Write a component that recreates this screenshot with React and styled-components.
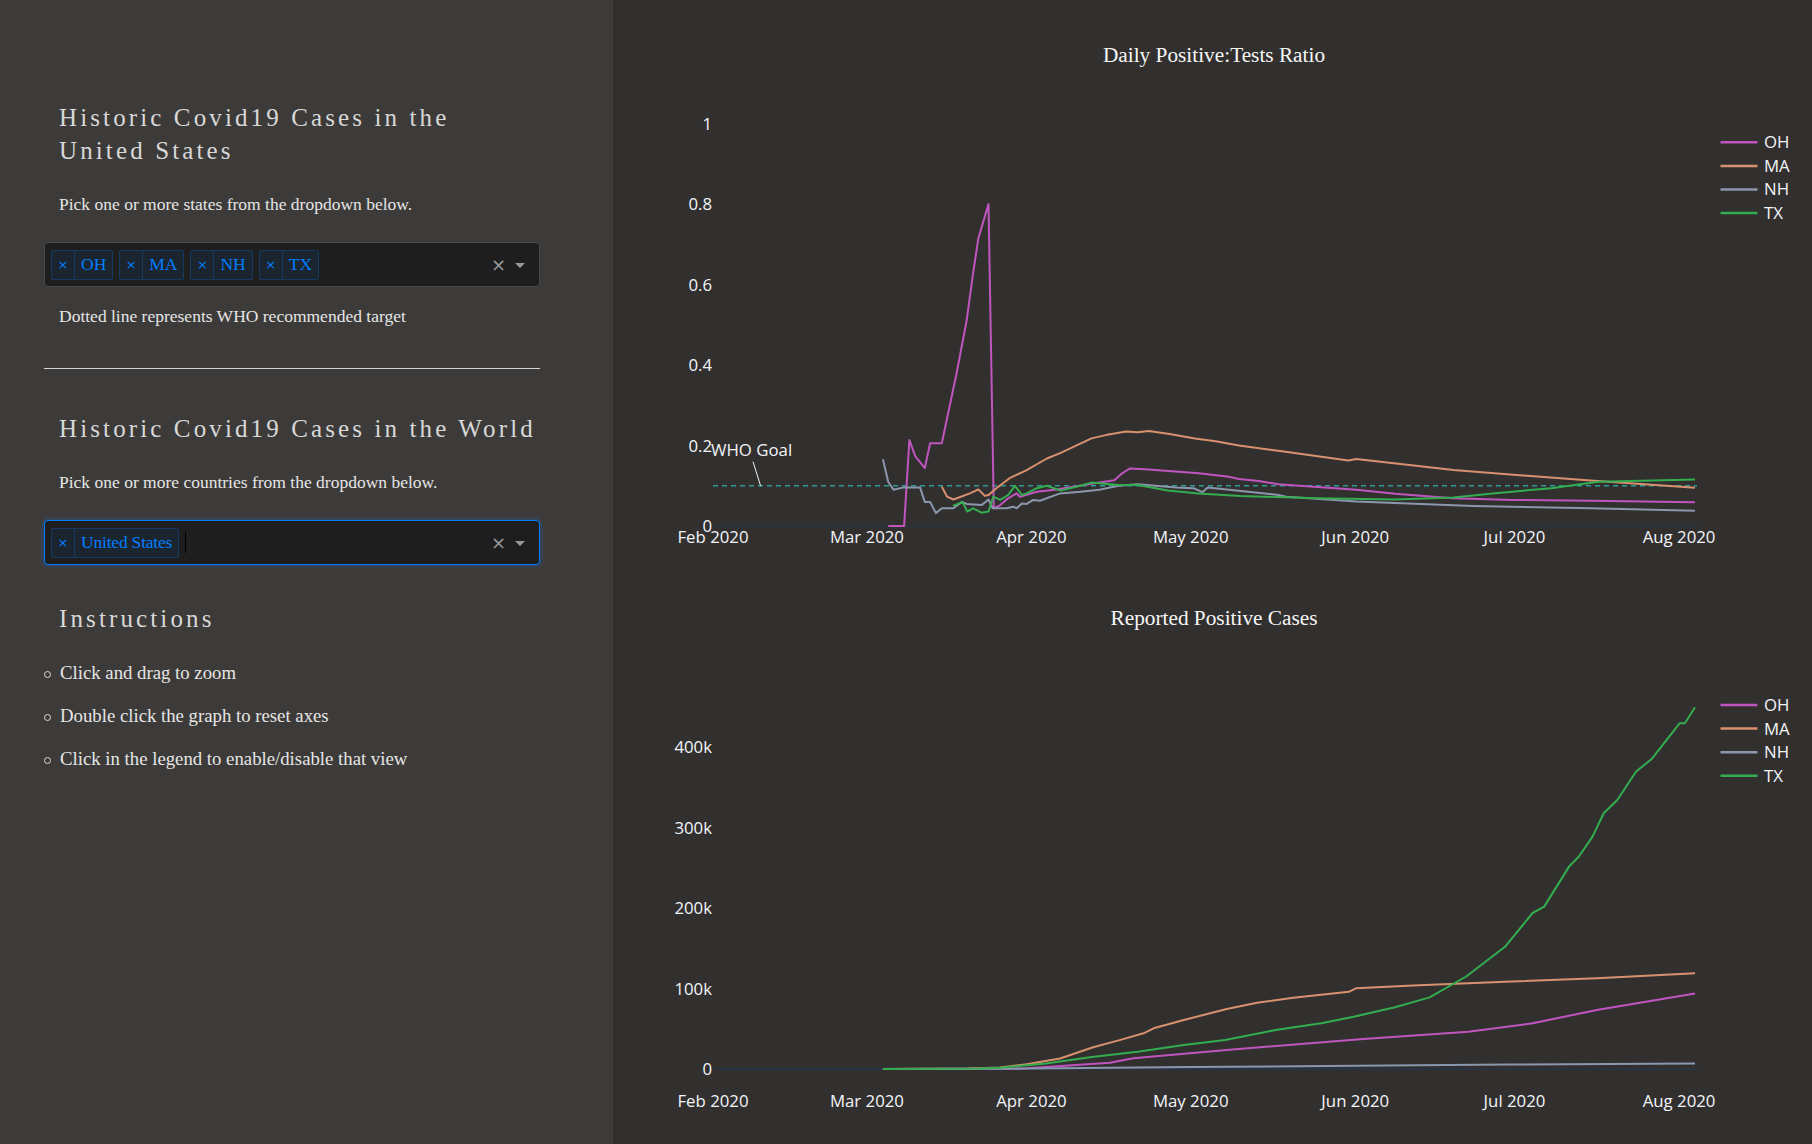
import React from "react";
import styled, { createGlobalStyle } from "styled-components";

const GlobalStyle = createGlobalStyle`
  html, body {
    margin: 0;
    padding: 0;
    background: #32302f;
  }
  body {
    font-family: "Liberation Serif", "Times New Roman", serif;
  }
`;

// x axis: day 0 is Feb 1 2020
const DAY_PX = 5.308;
const X0 = 100;
const xAt = (day) => X0 + day * DAY_PX;
const PLOT_RIGHT = 1084;
const LABEL_SHIFT = 5.9;

const MONTHS = [
  { label: "Feb 2020", day: 0 },
  { label: "Mar 2020", day: 29 },
  { label: "Apr 2020", day: 60 },
  { label: "May 2020", day: 90 },
  { label: "Jun 2020", day: 121 },
  { label: "Jul 2020", day: 151 },
  { label: "Aug 2020", day: 182 },
];

const COLORS = {
  OH: "#c055c0",
  MA: "#d8916f",
  NH: "#8c96ad",
  TX: "#33ad4f",
};

const RATIO = {
  OH: [[33,0],[36,0],[37,0.214],[38.1,0.174],[39.9,0.144],[40.9,0.206],[43.1,0.206],[45.9,0.38],[47.8,0.512],[49,0.629],[50,0.716],[51.9,0.801],[52.9,0.044],[54.1,0.052],[55.6,0.069],[57.2,0.081],[57.8,0.073],[61,0.085],[64.8,0.091],[69,0.1],[72.8,0.108],[75.6,0.114],[77.1,0.131],[78.5,0.143],[81.4,0.141],[91.5,0.131],[96.9,0.123],[99.1,0.117],[102.8,0.112],[106.5,0.104],[121.2,0.09],[128.5,0.08],[139.5,0.069],[150.6,0.065],[165.3,0.063],[185,0.059]],
  MA: [[43.1,0.098],[44.1,0.073],[45.3,0.066],[48.4,0.081],[50,0.091],[51.2,0.075],[51.9,0.077],[53.4,0.094],[56,0.12],[59.1,0.139],[62.9,0.168],[65.5,0.182],[71.3,0.218],[74,0.226],[77.8,0.235],[80,0.233],[82.1,0.236],[86,0.229],[90.8,0.218],[94.7,0.211],[99.1,0.2],[106.5,0.187],[119.7,0.163],[121.2,0.167],[139.5,0.139],[165.3,0.113],[185,0.095]],
  NH: [[32,0.166],[33,0.11],[34,0.09],[35.9,0.096],[39,0.096],[39.9,0.06],[40.9,0.06],[42,0.032],[43.1,0.044],[45.3,0.044],[46.9,0.06],[47.8,0.055],[50.6,0.052],[51.9,0.066],[52.7,0.044],[55.3,0.044],[56.6,0.048],[57.2,0.044],[58.2,0.056],[59.1,0.055],[60.3,0.065],[61.6,0.063],[65.4,0.081],[69.2,0.085],[72.8,0.09],[76.4,0.1],[80,0.104],[87.2,0.096],[90.5,0.094],[92.2,0.084],[93.2,0.096],[106.5,0.077],[108,0.073],[121.2,0.061],[143.2,0.05],[165.3,0.044],[185,0.038]],
  TX: [[45.2,0.05],[47,0.06],[47.9,0.036],[49,0.044],[50.6,0.033],[51.9,0.036],[52.8,0.073],[54.1,0.065],[55.6,0.077],[56.9,0.1],[58.2,0.077],[59.1,0.081],[61,0.094],[62.9,0.1],[65.5,0.088],[69.2,0.1],[71.3,0.108],[76.4,0.102],[80,0.102],[85.7,0.088],[91.5,0.081],[99.3,0.075],[113.8,0.069],[128.5,0.066],[139.5,0.071],[146.9,0.081],[157.9,0.094],[166.8,0.11],[185,0.116]],
};

// values in thousands
const CASES = {
  OH: [[32,0],[50,0.3],[59.1,0.9],[74.8,7.8],[79.2,13.3],[96.8,23.6],[121.9,37],[142.3,46.4],[154.4,56.8],[166.5,73.4],[185,94]],
  MA: [[32,0],[48,0.5],[54.1,2],[59.1,6],[65.4,13],[71.6,27],[76.6,36],[81.1,44.4],[83,50.6],[88.7,61],[96.8,74.6],[102.5,82.5],[109.3,88.5],[119.8,96],[121.2,100.5],[131.9,104],[149.2,108.6],[166.5,112.8],[185,119]],
  NH: [[32,0],[60,0.5],[90,2.5],[121,4],[150,5.5],[185,7]],
  TX: [[32,0],[50,0.5],[54.1,1.5],[62.7,7],[71.4,15],[80,21.5],[88.7,30],[96.5,36],[106,48.5],[114.6,57],[120.7,65],[128.5,76.7],[135,89],[141.9,115],[149.2,152],[154.4,194],[156.6,202],[161.3,252],[163.1,264],[165.7,289],[167.8,318],[170.4,335],[173.9,370],[176.9,386],[182.1,430],[183.1,430],[185,450]],
};

const STATES = ["OH", "MA", "NH", "TX"];

const LineChart = ({ title, titleY, zeroY, unit, ticks, labelY, legendY, data, goal }) => {
  const yAt = (v) => zeroY - v * unit;
  const toPath = (pts) =>
    pts.map(([d, v], i) => `${i ? "L" : "M"}${xAt(d).toFixed(1)},${yAt(v).toFixed(1)}`).join(" ");

  return (
    <ChartSvg width="1199" height="572" viewBox="0 0 1199 572">
      <ChartTitle x="601" y={titleY} textAnchor="middle">
        {title}
      </ChartTitle>

      {ticks.map((t) => (
        <TickText key={t.label} x="99" y={yAt(t.value) + LABEL_SHIFT} textAnchor="end">
          {t.label}
        </TickText>
      ))}
      {MONTHS.map((m) => (
        <TickText key={m.label} x={xAt(m.day)} y={labelY + LABEL_SHIFT} textAnchor="middle">
          {m.label}
        </TickText>
      ))}

      <ZeroLine x1={X0 + 1} x2={PLOT_RIGHT} y1={zeroY} y2={zeroY} />

      {goal && (
        <g>
          <GoalLine x1={X0} x2={PLOT_RIGHT} y1={yAt(goal)} y2={yAt(goal)} />
          <ArrowLine x1="140" y1="461.7" x2="147.6" y2={yAt(goal)} />
          <TickText x="98" y="455.8">WHO Goal</TickText>
        </g>
      )}

      {STATES.map((s) => (
        <SeriesPath key={s} d={toPath(data[s])} stroke={COLORS[s]} />
      ))}

      {STATES.map((s, i) => (
        <g key={s}>
          <LegendLine x1="1107.5" x2="1144.5" y1={legendY + i * 23.6} y2={legendY + i * 23.6} stroke={COLORS[s]} />
          <TickText x="1151" y={legendY + i * 23.6 + LABEL_SHIFT}>
            {s}
          </TickText>
        </g>
      ))}
    </ChartSvg>
  );
};

const StateTags = ["OH", "MA", "NH", "TX"];

const App = () => {
  return (
    <Page>
      <GlobalStyle />
      <Sidebar>
        <Heading>Historic Covid19 Cases in the United States</Heading>
        <Note $top={25}>Pick one or more states from the dropdown below.</Note>
        <Dropdown $top={26}>
          <TagList>
            {StateTags.map((s) => (
              <Tag key={s}>
                <TagRemove>×</TagRemove>
                <TagLabel>{s}</TagLabel>
              </Tag>
            ))}
          </TagList>
          <ClearX>×</ClearX>
          <Arrow />
        </Dropdown>
        <Note $top={17}>Dotted line represents WHO recommended target</Note>

        <Divider />

        <Heading $top={43}>Historic Covid19 Cases in the World</Heading>
        <Note $top={24.6}>Pick one or more countries from the dropdown below.</Note>
        <Dropdown $top={26.7} $focused>
          <TagList>
            <Tag>
              <TagRemove>×</TagRemove>
              <TagLabel $narrow>United States</TagLabel>
            </Tag>
            <Caret />
          </TagList>
          <ClearX>×</ClearX>
          <Arrow />
        </Dropdown>

        <Heading $top={36.7}>Instructions</Heading>
        <Steps>
          <Step>Click and drag to zoom</Step>
          <Step>Double click the graph to reset axes</Step>
          <Step>Click in the legend to enable/disable that view</Step>
        </Steps>
      </Sidebar>

      <Main>
        <LineChart
          title="Daily Positive:Tests Ratio"
          titleY={62}
          zeroY={526}
          unit={402}
          ticks={[
            { value: 0, label: "0" },
            { value: 0.2, label: "0.2" },
            { value: 0.4, label: "0.4" },
            { value: 0.6, label: "0.6" },
            { value: 0.8, label: "0.8" },
            { value: 1, label: "1" },
          ]}
          labelY={537.3}
          legendY={142.3}
          data={RATIO}
          goal={0.1}
        />
        <LineChart
          title="Reported Positive Cases"
          titleY={53}
          zeroY={497}
          unit={0.804}
          ticks={[
            { value: 0, label: "0" },
            { value: 100, label: "100k" },
            { value: 200, label: "200k" },
            { value: 300, label: "300k" },
            { value: 400, label: "400k" },
          ]}
          labelY={528.7}
          legendY={133}
          data={CASES}
        />
      </Main>
    </Page>
  );
};

export default App;

const Page = styled.div`
  display: flex;
  min-height: 100vh;
  width: 100%;
`;

const Sidebar = styled.aside`
  width: 613px;
  flex-shrink: 0;
  box-sizing: border-box;
  padding: 101px 73px 0 44px;
  background-color: #3d3b39;
  color: #e6e6e6;
`;

const Heading = styled.h3`
  margin: ${(p) => p.$top || 0}px -3px 0 0;
  padding-left: 15px;
  font-weight: 400;
  font-size: 25px;
  line-height: 33px;
  letter-spacing: 3.12px;
  color: #d8d8d8;
`;

const Note = styled.p`
  margin: ${(p) => p.$top}px 0 0;
  padding-left: 15px;
  font-size: 17.5px;
  line-height: 24px;
  color: #e6e6e6;
`;

const Dropdown = styled.div`
  margin-top: ${(p) => p.$top}px;
  height: 45px;
  box-sizing: border-box;
  display: flex;
  align-items: center;
  padding: 0 15px 0 6px;
  background-color: #1e1e1e;
  border: 1px solid ${(p) => (p.$focused ? "#007eff" : "#4a4a4a")};
  border-radius: 4px;
  box-shadow: ${(p) => (p.$focused ? "0 0 0 3px rgba(0, 126, 255, 0.12)" : "none")};
`;

const TagList = styled.div`
  flex: 1;
  display: flex;
  align-items: center;
  gap: 6px;
`;

const Tag = styled.div`
  display: flex;
  align-items: stretch;
  height: 30px;
  box-sizing: border-box;
  border: 1px solid rgba(0, 126, 255, 0.24);
  border-radius: 2px;
  background-color: rgba(0, 126, 255, 0.08);
  color: #007eff;
  font-size: 17.5px;
`;

const TagRemove = styled.span`
  width: 22px;
  display: flex;
  align-items: center;
  justify-content: center;
  border-right: 1px solid rgba(0, 126, 255, 0.24);
  font-family: "DejaVu Sans", sans-serif;
  font-size: 13px;
`;

const TagLabel = styled.span`
  display: flex;
  align-items: center;
  padding: 0 6px;
  letter-spacing: ${(p) => (p.$narrow ? "-0.2px" : "0")};
`;

const Caret = styled.span`
  width: 1px;
  height: 21px;
  background-color: #000;
`;

const ClearX = styled.span`
  width: 17px;
  margin-right: 8px;
  text-align: center;
  color: #999;
  font-family: "DejaVu Sans", sans-serif;
  font-size: 18px;
  line-height: 1;
`;

const Arrow = styled.span`
  width: 0;
  height: 0;
  margin: 2px -1px 0 0;
  border-top: 5px solid #999;
  border-left: 5px solid transparent;
  border-right: 5px solid transparent;
`;

const Divider = styled.hr`
  margin: 40px 0 0;
  height: 0;
  border: none;
  border-top: 1px solid #d4d4d4;
`;

const Steps = styled.ul`
  margin: 26px 0 0;
  padding: 0;
  list-style: none;
`;

const Step = styled.li`
  font-size: 18.75px;
  line-height: 24px;
  color: #e6e6e6;
  margin-bottom: 19px;

  &::before {
    content: "";
    display: inline-block;
    box-sizing: border-box;
    width: 7px;
    height: 7px;
    margin: 0 9px 0 0;
    border: 1px solid #dcdcdc;
    border-radius: 50%;
    vertical-align: middle;
  }
`;

const Main = styled.main`
  flex: 1;
  display: flex;
  flex-direction: column;
  background-color: #32302f;
`;

const ChartSvg = styled.svg`
  display: block;
`;

const ChartTitle = styled.text`
  font-family: "Liberation Serif", "Times New Roman", serif;
  font-size: 21.3px;
  fill: #f7f7f7;
`;

const TickText = styled.text`
  font-family: "Open Sans", "DejaVu Sans", sans-serif;
  font-size: 16.8px;
  fill: #f2f5fa;
`;

const ZeroLine = styled.line`
  stroke: #283442;
  stroke-width: 2;
`;

const GoalLine = styled.line`
  stroke: #2a9c96;
  stroke-width: 1.5;
  stroke-dasharray: 5 4;
`;

const ArrowLine = styled.line`
  stroke: #f2f5fa;
  stroke-width: 1;
`;

const SeriesPath = styled.path`
  fill: none;
  stroke-width: 2;
  stroke-linejoin: round;
`;

const LegendLine = styled.line`
  stroke-width: 2.5;
`;
